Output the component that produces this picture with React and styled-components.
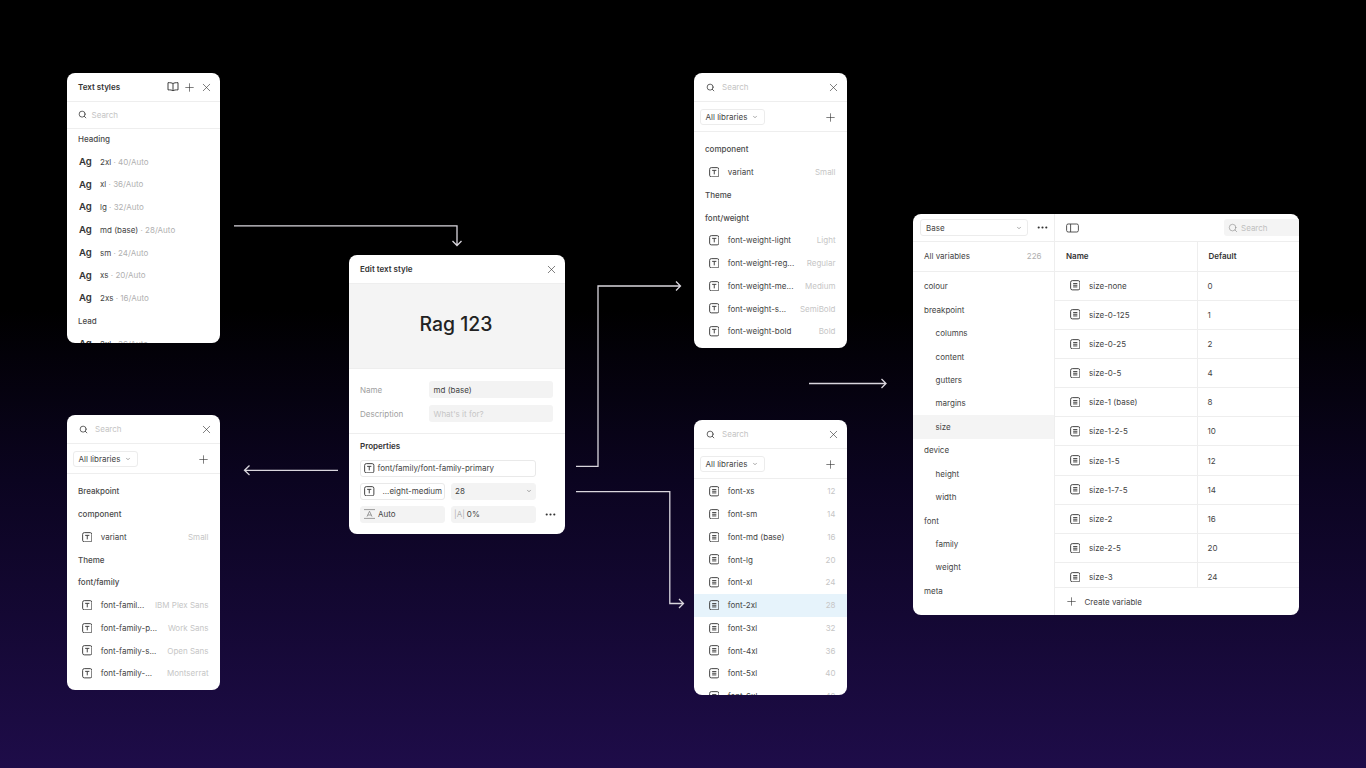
import React from 'react';
import styled, { createGlobalStyle } from 'styled-components';
import { Search, X, Plus, ChevronDown, MoreHorizontal } from 'lucide-react';

const Global = createGlobalStyle`
  html, body { margin: 0; padding: 0; background: #000; }
  body { font-family: Inter, "Liberation Sans", sans-serif; -webkit-font-smoothing: antialiased; }
  * { box-sizing: border-box; }
`;

const Canvas = styled.div`
  position: relative;
  width: 1366px;
  height: 768px;
  overflow: hidden;
  background: linear-gradient(180deg, #000 0, #000 310px, #0b0420 480px, #1b0b42 720px, #1e0c49 768px);
`;
const Wires = styled.svg`
  position: absolute;
  inset: 0;
  width: 1366px;
  height: 768px;
`;
const Panel = styled.section`
  position: absolute;
  left: ${p => p.$x}px;
  top: ${p => p.$y}px;
  width: ${p => p.$w}px;
  height: ${p => p.$h}px;
  background: #fff;
  border-radius: 8px;
  overflow: hidden;
  color: #3a3a3a;
  font-size: 8px;
  line-height: 1;
`;
const Head = styled.header`
  display: flex;
  align-items: center;
  gap: 4px;
  height: ${p => p.$h || 29}px;
  padding: 0 7.5px 0 ${p => p.$left || 11}px;
  border-bottom: 1px solid #eeeeee;
`;
const Title = styled.h2`
  flex: 1;
  margin: 0;
  font-size: 8px;
  font-weight: 600;
  color: #333;
`;
const SearchText = styled.span`
  flex: 1;
  color: #c4c4c4;
  font-size: 8px;
  padding-left: ${p => p.$pad || 5}px;
`;
const Toolbar = styled.div`
  display: flex;
  align-items: center;
  justify-content: space-between;
  height: 30px;
  padding: 1px 10px 0 5.5px;
  border-bottom: 1px solid #eeeeee;
`;
const Select = styled.div`
  display: flex;
  align-items: center;
  gap: 5px;
  height: 16.5px;
  padding: 0 6px 0 5px;
  border: 1px solid #ececec;
  border-radius: 3px;
  color: #444;
  font-size: 8px;
`;
const List = styled.div`
  padding-top: ${p => p.$top ?? 6.5}px;
`;
const Group = styled.div`
  display: flex;
  align-items: center;
  height: 22.75px;
  padding: 0 0 1px 11px;
  color: #4a4a4a;
  font-weight: 500;
`;
const Row = styled.div`
  display: flex;
  align-items: center;
  height: 22.75px;
  padding: 0 11.5px 1px 14.5px;
  background: ${p => (p.$on ? '#e6f3fb' : 'transparent')};
`;
const RowName = styled.span`
  flex: 1;
  padding-left: 8.7px;
  color: #444;
  white-space: nowrap;
`;
const RowValue = styled.span`
  color: #c6c6c6;
  white-space: nowrap;
`;
const Ag = styled.b`
  width: 21px;
  font-size: 9.6px;
  font-weight: 600;
  color: #333;
`;
const StyleRow = styled.div`
  display: flex;
  align-items: center;
  height: 22.75px;
  padding: 0 0 2px 12px;
  color: #444;
`;
const Muted = styled.span`
  color: #b0b0b0;
`;
const Preview = styled.div`
  display: flex;
  align-items: center;
  justify-content: center;
  height: 85px;
  padding: 0 2px 3px 0;
  background: #f4f4f4;
  border-bottom: 1px solid #eeeeee;
  color: #222;
  font-size: 19.4px;
  font-weight: 500;
`;
const Form = styled.div`
  display: grid;
  grid-template-columns: 68.5px 124px;
  align-items: center;
  row-gap: 7px;
  padding: 11.5px 12px 11px 11px;
  border-bottom: 1px solid #eeeeee;
`;
const Label = styled.label`
  padding-top: 2px;
  color: #a0a0a0;
`;
const Input = styled.div`
  display: flex;
  align-items: center;
  height: 17px;
  padding: 1.5px 5px 0;
  border-radius: 3px;
  background: #f3f3f3;
  color: ${p => (p.$ph ? '#c6c6c6' : '#444')};
`;
const Props = styled.div`
  padding: 0 0 0 11px;
`;
const PropsTitle = styled.h3`
  display: flex;
  align-items: center;
  height: 25px;
  margin: 0 0 1px;
  font-size: 8px;
  font-weight: 600;
  color: #333;
`;
const PropRows = styled.div`
  display: grid;
  grid-template-columns: 85px 85px 29px;
  column-gap: 6px;
  row-gap: 6px;
  align-items: center;
`;
const Token = styled.div`
  grid-column: ${p => (p.$wide ? 'span 2' : 'auto')};
  display: flex;
  align-items: center;
  gap: ${p => p.$gap ?? 3}px;
  height: 17px;
  padding: 0 3px 0 ${p => p.$left ?? 3}px;
  border-radius: 3px;
  border: 1px solid ${p => (p.$fill ? '#f3f3f3' : '#e9e9e9')};
  background: ${p => (p.$fill ? '#f3f3f3' : '#fff')};
  color: #444;
  white-space: nowrap;
  overflow: hidden;
`;
const Spacer = styled.span`
  flex: 1;
`;
const Dots = styled.div`
  display: flex;
  justify-content: center;
  padding-right: 13px;
  color: #333;
`;
const Sheet = styled.div`
  display: grid;
  grid-template-columns: 141.5px 1fr;
  grid-template-rows: minmax(0, 1fr);
  height: 100%;
`;
const Side = styled.aside`
  border-right: 1px solid #eeeeee;
`;
const SideHead = styled.div`
  display: flex;
  align-items: center;
  justify-content: space-between;
  height: 28px;
  padding: 0 5px 0 7px;
  border-bottom: 1px solid #eeeeee;
`;
const BaseSelect = styled(Select)`
  width: 107.5px;
  justify-content: space-between;
  padding: 0 5px;
`;
const AllVars = styled.div`
  display: flex;
  align-items: center;
  justify-content: space-between;
  height: 29.5px;
  padding: 0 12px 0 11px;
  border-bottom: 1px solid #eeeeee;
  color: #444;
`;
const Nav = styled.nav`
  padding-top: 3px;
`;
const NavItem = styled.div`
  display: flex;
  align-items: center;
  height: 23.45px;
  padding-left: ${p => (p.$sub ? 22.6 : 11)}px;
  color: #444;
  background: ${p => (p.$on ? '#f4f4f4' : 'transparent')};
`;
const Main = styled.div`
  display: flex;
  flex-direction: column;
  min-width: 0;
  min-height: 0;
`;
const MainHead = styled.div`
  display: flex;
  flex: none;
  align-items: center;
  justify-content: space-between;
  height: 28px;
  padding-left: 11.5px;
  border-bottom: 1px solid #eeeeee;
`;
const Finder = styled.div`
  display: flex;
  align-items: center;
  gap: 3px;
  width: 75px;
  height: 16.5px;
  padding-left: 4px;
  border-radius: 3px 0 0 3px;
  background: #f4f4f4;
  color: #c0c0c0;
`;
const TableHead = styled.div`
  display: grid;
  grid-template-columns: 143px 1fr;
  height: 29.5px;
  flex: none;
  border-bottom: 1px solid #eeeeee;
  font-weight: 600;
  color: #333;
`;
const Th = styled.div`
  display: flex;
  align-items: center;
  padding-left: ${p => p.$pad}px;
  border-right: ${p => (p.$line ? '1px solid #eeeeee' : '0')};
`;
const Table = styled.div`
  flex: 1;
  min-height: 0;
  overflow: hidden;
`;
const Tr = styled.div`
  display: grid;
  grid-template-columns: 143px 1fr;
  height: 29.17px;
  border-bottom: 1px solid #eeeeee;
  color: #444;
`;
const TdName = styled.div`
  display: flex;
  align-items: center;
  gap: 9px;
  padding-left: 15px;
  border-right: 1px solid #eeeeee;
`;
const TdValue = styled.div`
  display: flex;
  align-items: center;
  padding-left: 10px;
`;
const Foot = styled.div`
  display: flex;
  align-items: center;
  gap: 7px;
  flex: none;
  height: 28px;
  padding-left: 10px;
  border-top: 1px solid #eeeeee;
  color: #444;
`;

const TextIcon = () => (
  <svg width="10.5" height="10.5" viewBox="0 0 10 10" fill="none" stroke="#444" style={{ flex: 'none' }}>
    <rect x=".6" y=".6" width="8.8" height="8.8" rx="1.6" strokeWidth=".95" />
    <path d="M3 3.2h4M5 3.2v3.8" strokeWidth=".95" />
  </svg>
);
const VarIcon = () => (
  <svg width="10.5" height="10.5" viewBox="0 0 10 10" fill="none" stroke="#444" style={{ flex: 'none' }}>
    <rect x=".6" y=".6" width="8.8" height="8.8" rx="1.6" strokeWidth=".95" />
    <path d="M3 3.4h4M3 5h4M3 6.6h4" strokeWidth=".95" />
  </svg>
);
const BookIcon = () => (
  <svg width="12" height="10" viewBox="0 0 12 10" fill="none" stroke="#333" strokeWidth=".95">
    <path d="M6 1.6C5 .8 3.2.6 1 .7v7.2c2.2-.1 4 .1 5 .9 1-.8 2.8-1 5-.9V.7C8.8.6 7 .8 6 1.6ZM6 1.6v7.2" />
  </svg>
);
const PanelIcon = () => (
  <svg width="13" height="10" viewBox="0 0 13 10" fill="none" stroke="#444" strokeWidth=".9">
    <rect x=".6" y="1" width="11.8" height="8" rx="1.6" />
    <path d="M4.6 1v8" />
  </svg>
);
const LineHeightIcon = () => (
  <svg width="11" height="10" viewBox="0 0 11 10" fill="none" stroke="#777" strokeWidth=".7" style={{ flex: 'none' }}>
    <path d="M0 .6h11M0 9.4h11M3 7.6l2.5-5.4L8 7.6M3.9 6h3.2" />
  </svg>
);
const Close = () => <X size={13} strokeWidth={1.15} color="#333" />;
const Add = () => <Plus size={13} strokeWidth={1.15} color="#333" />;
const Glass = () => <Search size={9} strokeWidth={2} color="#333" />;

const Libraries = () => (
  <Toolbar>
    <Select>All libraries <ChevronDown size={6} strokeWidth={2} color="#555" /></Select>
    <Add />
  </Toolbar>
);
const SearchHead = () => (
  <Head $left={12}>
    <Glass />
    <SearchText $pad={3}>Search</SearchText>
    <Close />
  </Head>
);

const textStyles = [
  ['2xl', '40/Auto'], ['xl', '36/Auto'], ['lg', '32/Auto'], ['md (base)', '28/Auto'],
  ['sm', '24/Auto'], ['xs', '20/Auto'], ['2xs', '16/Auto'],
];
const families = [
  ['font-famil...', 'IBM Plex Sans'], ['font-family-p...', 'Work Sans'],
  ['font-family-s...', 'Open Sans'], ['font-family-...', 'Montserrat'],
];
const weights = [
  ['font-weight-light', 'Light'], ['font-weight-reg...', 'Regular'], ['font-weight-me...', 'Medium'],
  ['font-weight-s...', 'SemiBold'], ['font-weight-bold', 'Bold'],
];
const sizes = [
  ['font-xs', 12], ['font-sm', 14], ['font-md (base)', 16], ['font-lg', 20], ['font-xl', 24],
  ['font-2xl', 28], ['font-3xl', 32], ['font-4xl', 36], ['font-5xl', 40], ['font-6xl', 48],
];
const nav = [
  ['colour'], ['breakpoint'], ['columns', 1], ['content', 1], ['gutters', 1], ['margins', 1], ['size', 1, 1],
  ['device'], ['height', 1], ['width', 1], ['font'], ['family', 1], ['weight', 1], ['meta'],
];
const vars = [
  ['size-none', 0], ['size-0-125', 1], ['size-0-25', 2], ['size-0-5', 4], ['size-1 (base)', 8],
  ['size-1-2-5', 10], ['size-1-5', 12], ['size-1-7-5', 14], ['size-2', 16], ['size-2-5', 20], ['size-3', 24],
];

const TokenRow = ({ name, value }) => (
  <Row>
    <TextIcon />
    <RowName>{name}</RowName>
    <RowValue>{value}</RowValue>
  </Row>
);

export default function App() {
  return (
    <Canvas>
      <Global />
      <Wires viewBox="0 0 1366 768" fill="none" stroke="#d9d6dd" strokeWidth="1.3">
        <path d="M234 225.8H457V245.5M452.5 241L457 245.5L461.5 241" />
        <path d="M338 470.3H244.5M249.5 465.5L244.5 470.3L249.5 475" />
        <path d="M576 466.3H598V286H680.5M676 281.5L680.5 286L676 290.5" />
        <path d="M576 491.7H669.8V603.5H683.5M679 599L683.5 603.5L679 608" />
        <path d="M809 383.5H886M881.5 379L886 383.5L881.5 388" />
      </Wires>

      <Panel $x={67} $y={73} $w={153} $h={270}>
        <Head>
          <Title>Text styles</Title>
          <BookIcon />
          <Add />
          <Close />
        </Head>
        <Head $h={26.5} $left={10.5}>
          <Glass />
          <SearchText $pad={1}>Search</SearchText>
        </Head>
        <List $top={0}>
          <Group>Heading</Group>
          {textStyles.map(([n, v]) => (
            <StyleRow key={n}><Ag>Ag</Ag>{n}<Muted>&nbsp;· {v}</Muted></StyleRow>
          ))}
          <Group>Lead</Group>
          <StyleRow><Ag>Ag</Ag>2xl<Muted>&nbsp;· 36/Auto</Muted></StyleRow>
        </List>
      </Panel>

      <Panel $x={67} $y={415} $w={153} $h={275}>
        <SearchHead />
        <Libraries />
        <List>
          <Group>Breakpoint</Group>
          <Group>component</Group>
          <TokenRow name="variant" value="Small" />
          <Group>Theme</Group>
          <Group>font/family</Group>
          {families.map(([n, v]) => <TokenRow key={v} name={n} value={v} />)}
        </List>
      </Panel>

      <Panel $x={349} $y={255} $w={216} $h={279}>
        <Head $h={29}>
          <Title>Edit text style</Title>
          <Close />
        </Head>
        <Preview>Rag 123</Preview>
        <Form>
          <Label>Name</Label>
          <Input>md (base)</Input>
          <Label>Description</Label>
          <Input $ph>What's it for?</Input>
        </Form>
        <Props>
          <PropsTitle>Properties</PropsTitle>
          <PropRows>
            <Token $wide><TextIcon />font/family/font-family-primary</Token>
            <span />
            <Token $gap={8}><TextIcon />...eight-medium</Token>
            <Token $fill>28<Spacer /><ChevronDown size={6} strokeWidth={2} color="#555" /></Token>
            <span />
            <Token $fill><LineHeightIcon />Auto</Token>
            <Token $fill $gap={2} $left={2}><Muted>|A|</Muted>0%</Token>
            <Dots><MoreHorizontal size={13} strokeWidth={2} /></Dots>
          </PropRows>
        </Props>
      </Panel>

      <Panel $x={694} $y={73} $w={153} $h={275}>
        <SearchHead />
        <Libraries />
        <List>
          <Group>component</Group>
          <TokenRow name="variant" value="Small" />
          <Group>Theme</Group>
          <Group>font/weight</Group>
          {weights.map(([n, v]) => <TokenRow key={v} name={n} value={v} />)}
        </List>
      </Panel>

      <Panel $x={694} $y={420} $w={153} $h={275}>
        <SearchHead />
        <Libraries />
        <List $top={1.5}>
          {sizes.map(([n, v]) => (
            <Row key={n} $on={n === 'font-2xl'}>
              <VarIcon />
              <RowName>{n}</RowName>
              <RowValue>{v}</RowValue>
            </Row>
          ))}
        </List>
      </Panel>

      <Panel $x={913} $y={214} $w={386} $h={401}>
        <Sheet>
          <Side>
            <SideHead>
              <BaseSelect>Base <ChevronDown size={6} strokeWidth={2} color="#555" /></BaseSelect>
              <MoreHorizontal size={13} strokeWidth={2} color="#333" />
            </SideHead>
            <AllVars>All variables <Muted>226</Muted></AllVars>
            <Nav>
              {nav.map(([n, sub, on]) => <NavItem key={n} $sub={sub} $on={on}>{n}</NavItem>)}
            </Nav>
          </Side>
          <Main>
            <MainHead>
              <PanelIcon />
              <Finder><Search size={10} strokeWidth={1.2} color="#777" />Search</Finder>
            </MainHead>
            <TableHead>
              <Th $pad={11.5} $line>Name</Th>
              <Th $pad={11}>Default</Th>
            </TableHead>
            <Table>
              {vars.map(([n, v]) => (
                <Tr key={n}>
                  <TdName><VarIcon />{n}</TdName>
                  <TdValue>{v}</TdValue>
                </Tr>
              ))}
            </Table>
            <Foot><Add />Create variable</Foot>
          </Main>
        </Sheet>
      </Panel>
    </Canvas>
  );
}
